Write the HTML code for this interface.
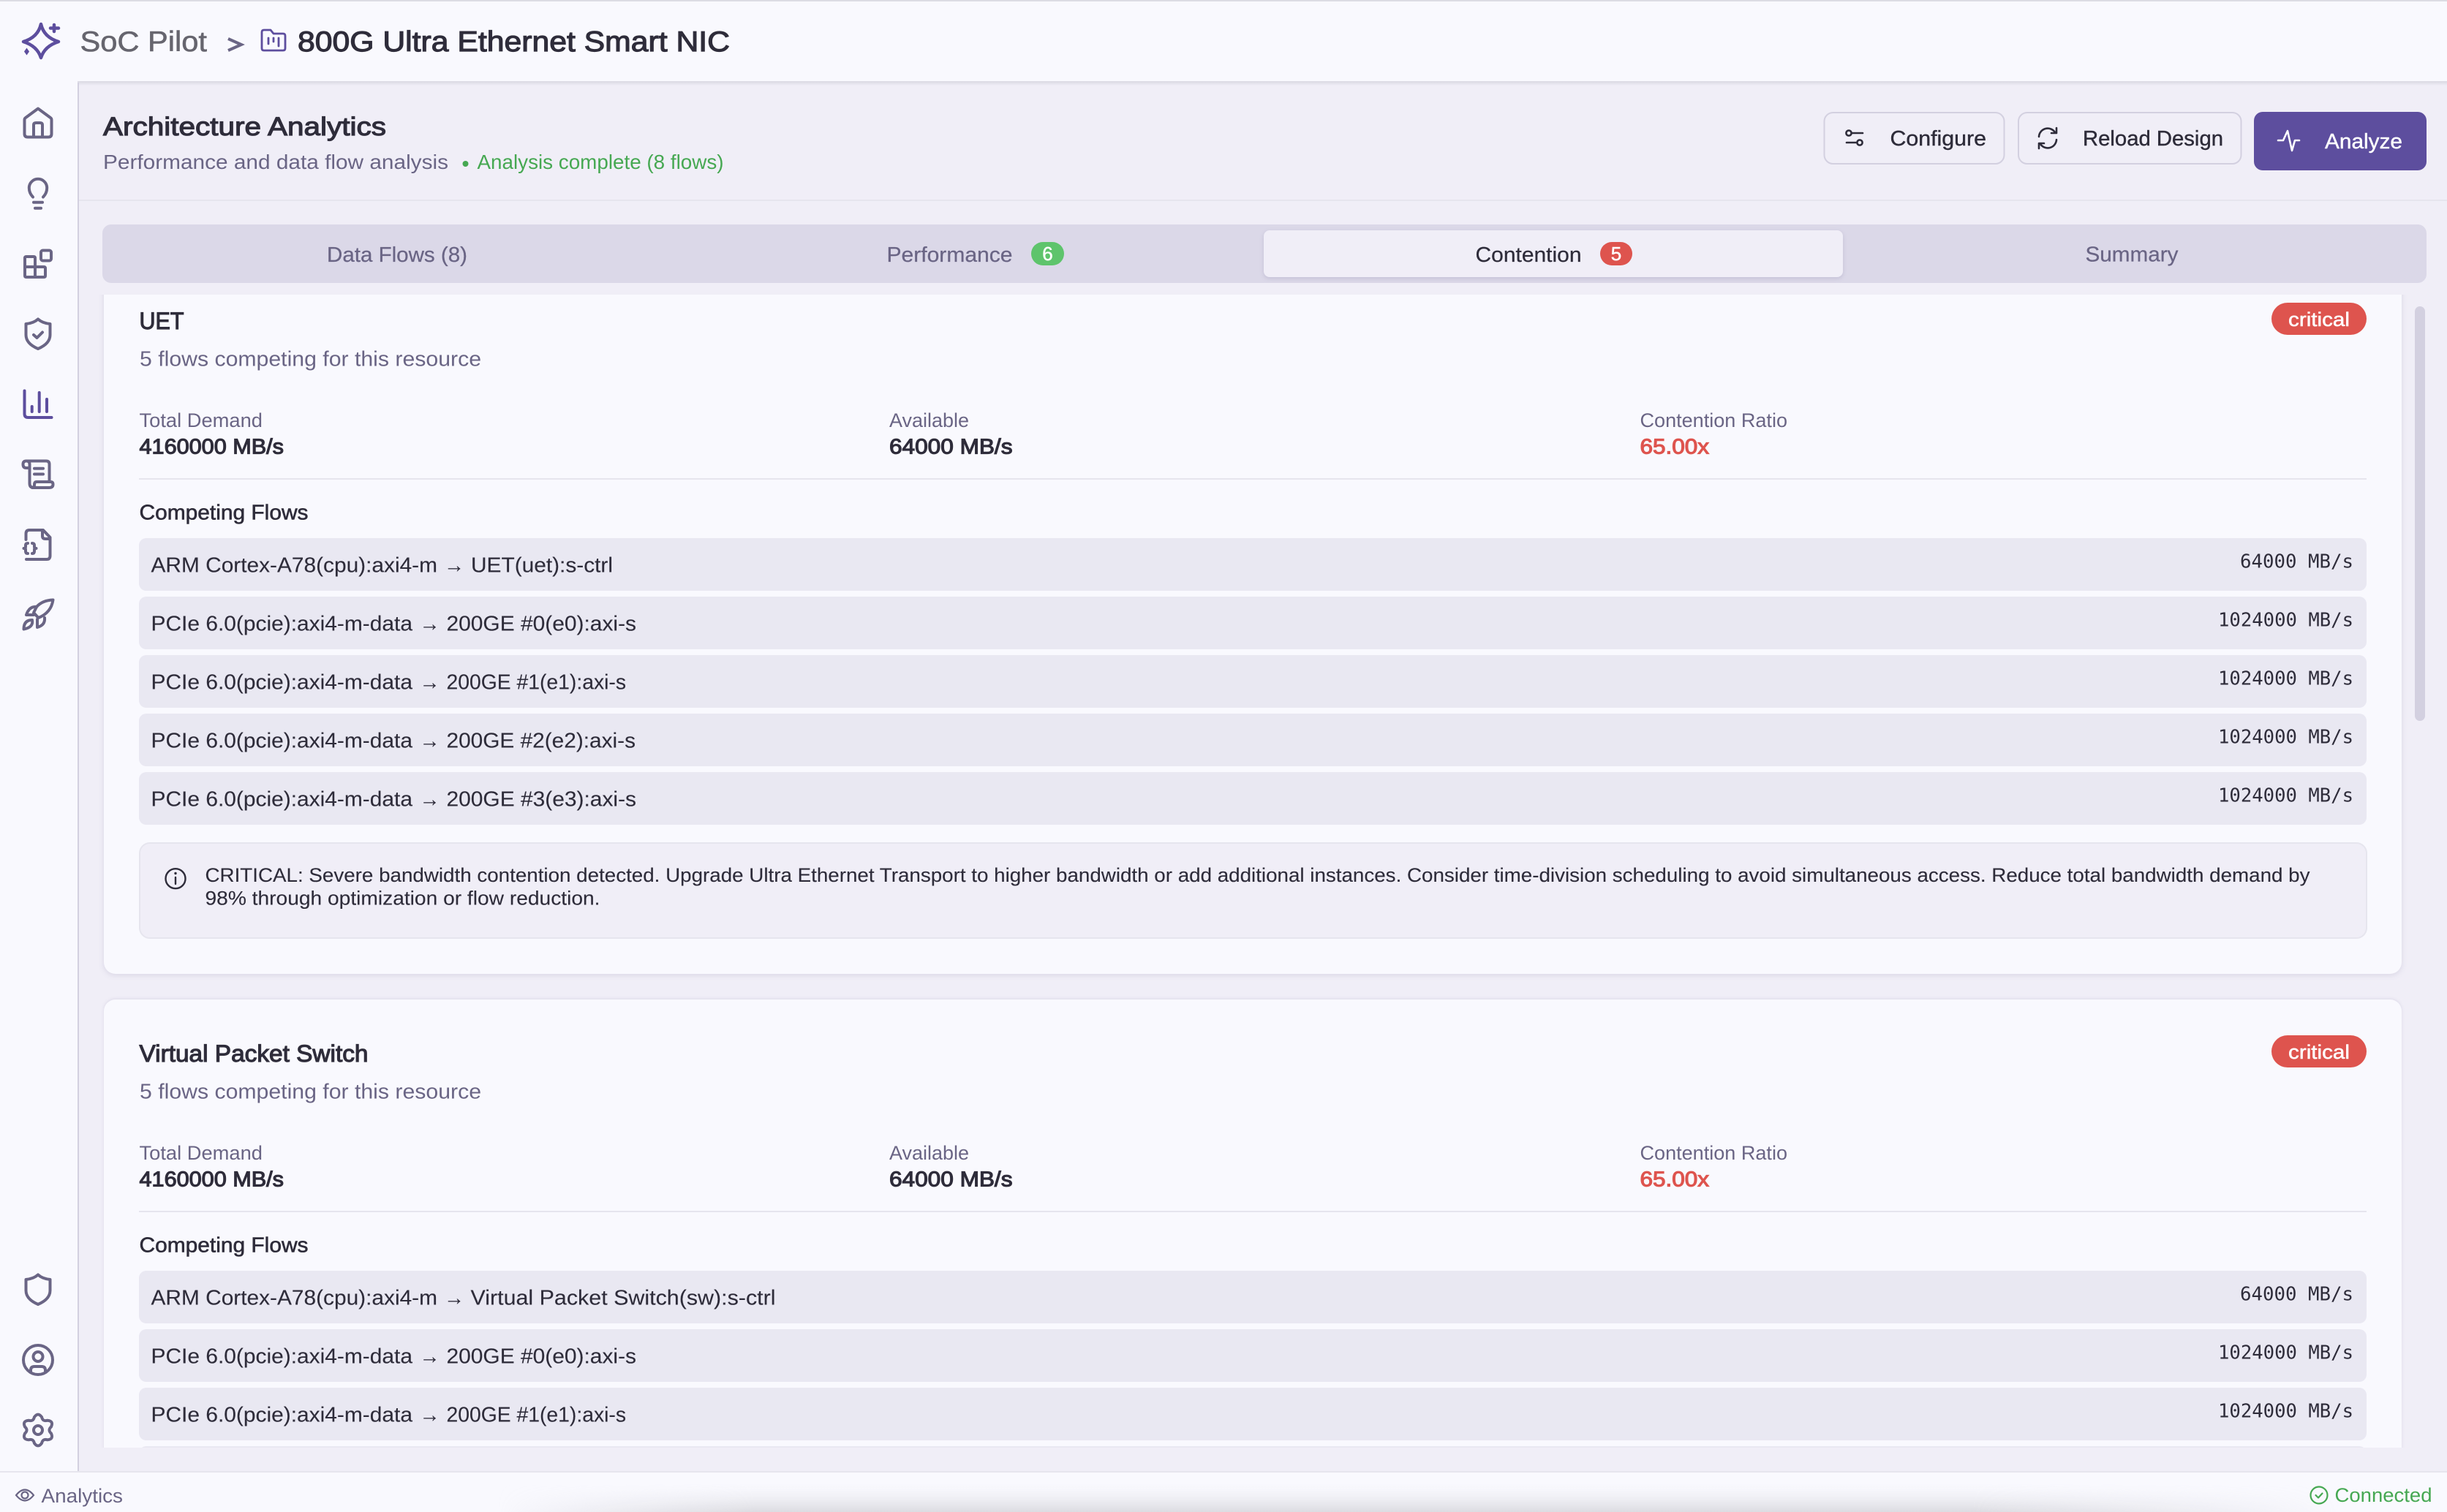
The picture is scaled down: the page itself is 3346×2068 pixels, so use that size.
<!DOCTYPE html>
<html lang="en"><head><meta charset="utf-8"><title>SoC Pilot - Architecture Analytics</title>
<style>
html,body{margin:0;padding:0;background:#F0EEF7;width:3346px;height:2068px;overflow:hidden}
svg{display:block}
text{font-family:"Liberation Sans",sans-serif;white-space:pre}
.m{stroke-width:.6}
.s{stroke-width:1.15}
.mono{font-family:"DejaVu Sans Mono","Liberation Mono",monospace;font-size:25.6px;fill:#2E2C3A}
.dk{fill:#2E2C3A;stroke:#2E2C3A}
.mu{fill:#6A6585;stroke:#6A6585}
.ic{fill:none;stroke:#6A6585;stroke-width:4;stroke-linecap:round;stroke-linejoin:round}
.row{fill:#E9E8F2}
</style></head><body>
<svg width="3346" height="2068" viewBox="0 0 3346 2068" xmlns="http://www.w3.org/2000/svg">
<defs>
<clipPath id="sc"><rect x="130" y="403" width="3165" height="1577"/></clipPath>
<linearGradient id="hs" x1="0" y1="0" x2="0" y2="1"><stop offset="0" stop-color="#d9d8e2"/><stop offset="1" stop-color="#F0EEF7"/></linearGradient>
<linearGradient id="gv" x1="0" y1="0" x2="0" y2="1"><stop offset="0" stop-color="#fff" stop-opacity="0"/><stop offset=".45" stop-color="#c9c9ce" stop-opacity=".14"/><stop offset="1" stop-color="#b4b4ba" stop-opacity=".42"/></linearGradient>
<linearGradient id="gh" x1="0" y1="0" x2="1" y2="0"><stop offset="0" stop-color="#000"/><stop offset=".14" stop-color="#fff"/><stop offset=".8" stop-color="#fff"/><stop offset="1" stop-color="#000"/></linearGradient>
<mask id="gm" maskUnits="userSpaceOnUse" x="680" y="2014" width="2520" height="54"><rect x="680" y="2014" width="2520" height="54" fill="url(#gh)"/></mask>
</defs>

<rect width="3346" height="2068" fill="#F0EEF7"/>

<!-- header -->
<rect x="0" y="111" width="3346" height="6" fill="url(#hs)"/>
<rect x="0" y="0" width="3346" height="111" fill="#F9F9FE"/>
<rect x="0" y="0" width="3346" height="2" fill="#DCDCE4"/>
<g fill="none" stroke="#5D4E9E" stroke-width="4.500" stroke-linejoin="round" stroke-linecap="round">
<path d="M56 33Q60 51 80 57Q61 63 56 79Q51 63 32 57Q52 51 56 33Z"/>
<path d="M74 34V43M69 38.500H80"/>
</g>
<path d="M36.500 65.500L40 70.500L36.500 75.500L33 70.500Z" fill="#5D4E9E"/>
<text x="109.500" y="70" font-size="39" textLength="173.500" lengthAdjust="spacingAndGlyphs" fill="#66656E" stroke="#66656E" class="m">SoC Pilot</text>
<path d="M312 53L330 61L312 69" fill="none" stroke="#6A6585" stroke-width="4"/>
<g fill="none" stroke="#5D4E9E" stroke-width="2.800" stroke-linejoin="round" stroke-linecap="round">
<path d="M358 66V44Q358 41 361 41H370L374 46H387Q390 46 390 49V66Q390 69 387 69H361Q358 69 358 66Z"/>
<path d="M367 52V60M374 52V57M381 52V63"/>
</g>
<text x="407" y="70" font-size="39" textLength="591" lengthAdjust="spacingAndGlyphs" class="dk s">800G Ultra Ethernet Smart NIC</text>

<!-- sidebar -->
<rect x="0" y="111" width="106" height="1901" fill="#F9F9FE"/>
<rect x="106" y="113" width="2" height="1899" fill="#D3D0E0"/>
<g class="ic">
<path d="M52 148.500L69 161Q70.500 162 70.500 164V183Q70.500 187.500 66 187.500H38Q33.500 187.500 33.500 183V164Q33.500 162 35 161Z"/>
<path d="M46 187V171Q46 168 49 168H55Q58 168 58 171V187"/>
<path d="M45 269.500Q39.800 264 39.800 257A12.200 12.200 0 0 1 64.200 257Q64.200 264 59 269.500"/>
<path d="M46 276.700H58M48 284.700H56"/>
<rect x="56" y="342.500" width="14" height="14" rx="2.500"/>
<path d="M34 353Q34 351 36 351H46Q48 351 48 353V365H60Q62 365 62 367V377Q62 379 60 379H36Q34 379 34 377ZM34 365H48V379"/>
<path d="M52 436.500Q58 442 68.500 443V458Q68.500 470 52 477Q35.500 470 35.500 458V443Q46 442 52 436.500Z"/>
<path d="M46 458L50.500 462L58 454.500"/>
<path d="M36 630.500H63Q67.500 630.500 67.500 635V658M40.500 640V661Q40.500 667 46 667H67Q72.500 667 72.500 662.500Q72.500 659 69 659H50Q47 659 47 663Q47 667 44 667"/>
<path d="M36 630.500Q31.500 630.500 31.500 635Q31.500 640 36 640H40.500V635Q40.500 630.500 36 630.500"/>
<path d="M47 640.700H59M47 648.500H59"/>
<path d="M35.500 738V730Q35.500 725 40 725H59L68.500 735V760Q68.500 765 64 765H36"/>
<path d="M58 726V733Q58 737 62 737H68"/>
<path d="M38 743Q35 743 35 746V748Q35 750 32.500 750Q35 750 35 752V754Q35 757 38 757M44 743Q47 743 47 746V748Q47 750 49.500 750Q47 750 47 752V754Q47 757 44 757"/>
<path d="M72.500 820.500Q58 821 50 830L46 838L52.500 845Q70 838 72.500 820.500Z"/>
<path d="M50 830Q40 829 36 841L46 841"/>
<path d="M61 845Q62 855 51 858V847"/>
<path d="M32.500 860.500Q32.500 848 44 848Q46 858 32.500 860.500Z"/>
<path d="M52 1743.500Q58 1749 68.500 1750V1765Q68.500 1777 52 1784Q35.500 1777 35.500 1765V1750Q46 1749 52 1743.500Z"/>
<circle cx="52" cy="1860" r="20"/>
<circle cx="52" cy="1855.500" r="6.500"/>
<path d="M42 1876V1874Q42 1869 47 1869H57Q62 1869 62 1874V1876"/>
<g transform="translate(52 1956)">
<path d="M-5.100-17.800Q0-25 5.100-17.800Q6.500-11.300 12.850-13.300Q21.650-12.500 17.950-4.480Q13 0 17.950 4.480Q21.650 12.500 12.850 13.300Q6.500 11.300 5.100 17.800Q0 25-5.100 17.800Q-6.500 11.300-12.850 13.300Q-21.650 12.500-17.950 4.480Q-13 0-17.950-4.480Q-21.650-12.500-12.850-13.300Q-6.500-11.300-5.100-17.800Z"/>
<circle r="6"/>
</g>
</g>
<g fill="none" stroke="#5D4E9E" stroke-width="4" stroke-linecap="round" stroke-linejoin="round">
<path d="M33.500 534.500V566Q33.500 571 38.500 571H70.500M43.700 556V563M53.700 537V563M64 546V563"/>
</g>

<!-- page header -->
<rect x="108" y="273" width="3238" height="2" fill="#E6E5EE"/>
<text x="141" y="185" font-size="35.500" textLength="387" lengthAdjust="spacingAndGlyphs" class="dk s">Architecture Analytics</text>
<text x="141" y="231" font-size="27.500" textLength="472" lengthAdjust="spacingAndGlyphs" class="mu" stroke-width="0">Performance and data flow analysis</text>
<circle cx="636.500" cy="224" r="4" fill="#46A852"/>
<text x="652.500" y="231" font-size="27.500" textLength="337" lengthAdjust="spacingAndGlyphs" fill="#46A852">Analysis complete (8 flows)</text>

<rect x="2494.500" y="154" width="246" height="70" rx="12" fill="#F0EEF7" stroke="#D3D0E0" stroke-width="2"/>
<rect x="2760" y="154" width="304.500" height="70" rx="12" fill="#F0EEF7" stroke="#D3D0E0" stroke-width="2"/>
<rect x="3082" y="153" width="236" height="80" rx="12" fill="#5D4E9E"/>
<g fill="none" stroke="#2E2C3A" stroke-width="2.600" stroke-linecap="round" stroke-linejoin="round">
<circle cx="2528" cy="182" r="3.600"/><path d="M2532 182H2547M2525 195H2539"/><circle cx="2543" cy="195" r="3.600"/>
<path d="M2788 187A12 12 0 0 1 2810 181M2812 175V182H2805M2812 191A12 12 0 0 1 2790 197M2788 203V196H2795"/>
</g>
<path d="M3115 192H3122L3128 179L3134 206L3138 192H3144" fill="none" stroke="#fff" stroke-width="2.600" stroke-linecap="round" stroke-linejoin="round"/>
<text x="2584.500" y="199" font-size="28.500" textLength="131.500" lengthAdjust="spacingAndGlyphs" class="dk" stroke-width=".4">Configure</text>
<text x="2848" y="199" font-size="28.500" textLength="192" lengthAdjust="spacingAndGlyphs" class="dk" stroke-width=".4">Reload Design</text>
<text x="3179" y="203" font-size="28.500" textLength="106" lengthAdjust="spacingAndGlyphs" fill="#fff" stroke="#fff" stroke-width=".4">Analyze</text>

<!-- tabs -->
<rect x="140" y="307" width="3178" height="80" rx="12" fill="#DBD8E8"/>
<rect x="1728" y="315" width="792" height="64" rx="8" fill="#F0EEF7" style="filter:drop-shadow(0 2px 3px rgba(60,50,110,.14))"/>
<text x="447" y="358" font-size="28.500" textLength="192" lengthAdjust="spacingAndGlyphs" class="mu" stroke-width=".25">Data Flows (8)</text>
<text x="1212.500" y="358" font-size="28.500" textLength="172" lengthAdjust="spacingAndGlyphs" class="mu" stroke-width=".25">Performance</text>
<rect x="1410" y="331" width="45" height="32" rx="16" fill="#5EC46C"/>
<text x="1432.500" y="356" font-size="26" text-anchor="middle" fill="#fff" stroke="#fff" stroke-width=".5">6</text>
<text x="2017.500" y="358" font-size="28.500" textLength="145" lengthAdjust="spacingAndGlyphs" class="dk" stroke-width=".25">Contention</text>
<rect x="2188" y="331" width="44" height="32" rx="16" fill="#DE544E"/>
<text x="2210" y="356" font-size="26" text-anchor="middle" fill="#fff" stroke="#fff" stroke-width=".5">5</text>
<text x="2851.500" y="357.500" font-size="28.500" textLength="127" lengthAdjust="spacingAndGlyphs" class="mu" stroke-width=".25">Summary</text>

<!-- scrollable -->
<g clip-path="url(#sc)">
<!-- card 1 -->
<rect x="142" y="365" width="3142" height="967" rx="16" fill="#F9F9FE" style="filter:drop-shadow(0 2px 4px rgba(60,50,110,.12))"/>
<text x="190.500" y="450" font-size="32" textLength="61" lengthAdjust="spacingAndGlyphs" class="dk s">UET</text>
<text x="191" y="500.700" font-size="28.500" textLength="467" lengthAdjust="spacingAndGlyphs" class="mu" stroke-width="0">5 flows competing for this resource</text>
<rect x="3106" y="414" width="130" height="44" rx="22" fill="#DE544E"/>
<text x="3129" y="446" font-size="26.500" textLength="84" lengthAdjust="spacingAndGlyphs" fill="#fff" stroke="#fff" stroke-width=".5">critical</text>
<text x="190.500" y="584" font-size="26.500" textLength="168.500" lengthAdjust="spacingAndGlyphs" class="mu" stroke-width="0">Total Demand</text>
<text x="190.500" y="620.700" font-size="28.500" textLength="197.500" lengthAdjust="spacingAndGlyphs" class="dk s">4160000 MB/s</text>
<text x="1216" y="584" font-size="26.500" textLength="109" lengthAdjust="spacingAndGlyphs" class="mu" stroke-width="0">Available</text>
<text x="1216" y="620.700" font-size="28.500" textLength="168.500" lengthAdjust="spacingAndGlyphs" class="dk s">64000 MB/s</text>
<text x="2242.500" y="584" font-size="26.500" textLength="201.500" lengthAdjust="spacingAndGlyphs" class="mu" stroke-width="0">Contention Ratio</text>
<text x="2242.500" y="620.700" font-size="28.500" textLength="94.500" lengthAdjust="spacingAndGlyphs" fill="#DE544E" stroke="#DE544E" class="s">65.00x</text>
<rect x="190" y="654" width="3046" height="2" fill="#E6E5EE"/>
<text x="190.500" y="710.700" font-size="28.500" textLength="231" lengthAdjust="spacingAndGlyphs" class="dk m">Competing Flows</text>

<rect class="row" x="190" y="736" width="3046" height="72" rx="10"/>
<rect class="row" x="190" y="816" width="3046" height="72" rx="10"/>
<rect class="row" x="190" y="896" width="3046" height="72" rx="10"/>
<rect class="row" x="190" y="976" width="3046" height="72" rx="10"/>
<rect class="row" x="190" y="1056" width="3046" height="72" rx="10"/>
<g font-size="28.500" class="dk" stroke-width=".12">
<text x="206.500" y="782.700" textLength="391.500" lengthAdjust="spacingAndGlyphs">ARM Cortex-A78(cpu):axi4-m</text><text x="607" y="782.700" textLength="28" lengthAdjust="spacingAndGlyphs">→</text><text x="644" y="782.700" textLength="194" lengthAdjust="spacingAndGlyphs">UET(uet):s-ctrl</text>
<text x="206.500" y="862.700" textLength="357.500" lengthAdjust="spacingAndGlyphs">PCIe 6.0(pcie):axi4-m-data</text><text x="573.500" y="862.700" textLength="28" lengthAdjust="spacingAndGlyphs">→</text><text x="610.500" y="862.700" textLength="259.500" lengthAdjust="spacingAndGlyphs">200GE #0(e0):axi-s</text>
<text x="206.500" y="942.700" textLength="357.500" lengthAdjust="spacingAndGlyphs">PCIe 6.0(pcie):axi4-m-data</text><text x="573.500" y="942.700" textLength="28" lengthAdjust="spacingAndGlyphs">→</text><text x="610.500" y="942.700" textLength="245.500" lengthAdjust="spacingAndGlyphs">200GE #1(e1):axi-s</text>
<text x="206.500" y="1022.700" textLength="357.500" lengthAdjust="spacingAndGlyphs">PCIe 6.0(pcie):axi4-m-data</text><text x="573.500" y="1022.700" textLength="28" lengthAdjust="spacingAndGlyphs">→</text><text x="610.500" y="1022.700" textLength="258.500" lengthAdjust="spacingAndGlyphs">200GE #2(e2):axi-s</text>
<text x="206.500" y="1102.700" textLength="357.500" lengthAdjust="spacingAndGlyphs">PCIe 6.0(pcie):axi4-m-data</text><text x="573.500" y="1102.700" textLength="28" lengthAdjust="spacingAndGlyphs">→</text><text x="610.500" y="1102.700" textLength="259.500" lengthAdjust="spacingAndGlyphs">200GE #3(e3):axi-s</text>
</g>
<text class="mono" x="3063" y="776.500" textLength="155" lengthAdjust="spacingAndGlyphs">64000 MB/s</text>
<text class="mono" x="3033" y="856.500" textLength="185" lengthAdjust="spacingAndGlyphs">1024000 MB/s</text>
<text class="mono" x="3033" y="936.500" textLength="185" lengthAdjust="spacingAndGlyphs">1024000 MB/s</text>
<text class="mono" x="3033" y="1016.500" textLength="185" lengthAdjust="spacingAndGlyphs">1024000 MB/s</text>
<text class="mono" x="3033" y="1096.500" textLength="185" lengthAdjust="spacingAndGlyphs">1024000 MB/s</text>

<rect x="191" y="1153" width="3045" height="130" rx="14" fill="#F0EEF7" stroke="#E6E5EE" stroke-width="2"/>
<g fill="none" stroke="#2E2C3A" stroke-width="2.400" stroke-linecap="round">
<circle cx="240" cy="1201.700" r="13.500"/><path d="M240 1200V1209"/>
</g>
<circle cx="240" cy="1194.500" r="1.700" fill="#2E2C3A"/>
<text x="280.500" y="1206" font-size="26.500" textLength="2878" lengthAdjust="spacingAndGlyphs" class="dk" stroke-width=".12">CRITICAL: Severe bandwidth contention detected. Upgrade Ultra Ethernet Transport to higher bandwidth or add additional instances. Consider time-division scheduling to avoid simultaneous access. Reduce total bandwidth demand by</text>
<text x="280.500" y="1237.700" font-size="26.500" textLength="540" lengthAdjust="spacingAndGlyphs" class="dk" stroke-width=".12">98% through optimization or flow reduction.</text>

<!-- card 2 -->
<rect x="142" y="1367" width="3142" height="640" rx="16" fill="#F9F9FE" style="filter:drop-shadow(0 -1px 2px rgba(60,50,110,.1))"/>
<g transform="translate(0 1002)">
<text x="190.500" y="450" font-size="32" textLength="313" lengthAdjust="spacingAndGlyphs" class="dk s">Virtual Packet Switch</text>
<text x="191" y="500.700" font-size="28.500" textLength="467" lengthAdjust="spacingAndGlyphs" class="mu" stroke-width="0">5 flows competing for this resource</text>
<rect x="3106" y="414" width="130" height="44" rx="22" fill="#DE544E"/>
<text x="3129" y="446" font-size="26.500" textLength="84" lengthAdjust="spacingAndGlyphs" fill="#fff" stroke="#fff" stroke-width=".5">critical</text>
<text x="190.500" y="584" font-size="26.500" textLength="168.500" lengthAdjust="spacingAndGlyphs" class="mu" stroke-width="0">Total Demand</text>
<text x="190.500" y="620.700" font-size="28.500" textLength="197.500" lengthAdjust="spacingAndGlyphs" class="dk s">4160000 MB/s</text>
<text x="1216" y="584" font-size="26.500" textLength="109" lengthAdjust="spacingAndGlyphs" class="mu" stroke-width="0">Available</text>
<text x="1216" y="620.700" font-size="28.500" textLength="168.500" lengthAdjust="spacingAndGlyphs" class="dk s">64000 MB/s</text>
<text x="2242.500" y="584" font-size="26.500" textLength="201.500" lengthAdjust="spacingAndGlyphs" class="mu" stroke-width="0">Contention Ratio</text>
<text x="2242.500" y="620.700" font-size="28.500" textLength="94.500" lengthAdjust="spacingAndGlyphs" fill="#DE544E" stroke="#DE544E" class="s">65.00x</text>
<rect x="190" y="654" width="3046" height="2" fill="#E6E5EE"/>
<text x="190.500" y="710.700" font-size="28.500" textLength="231" lengthAdjust="spacingAndGlyphs" class="dk m">Competing Flows</text>
<rect class="row" x="190" y="736" width="3046" height="72" rx="10"/>
<rect class="row" x="190" y="816" width="3046" height="72" rx="10"/>
<rect class="row" x="190" y="896" width="3046" height="72" rx="10"/>
<rect class="row" x="190" y="976" width="3046" height="20" rx="10"/>
<g font-size="28.500" class="dk" stroke-width=".12">
<text x="206.500" y="782.700" textLength="391.500" lengthAdjust="spacingAndGlyphs">ARM Cortex-A78(cpu):axi4-m</text><text x="607" y="782.700" textLength="28" lengthAdjust="spacingAndGlyphs">→</text><text x="643.500" y="782.700" textLength="417" lengthAdjust="spacingAndGlyphs">Virtual Packet Switch(sw):s-ctrl</text>
<text x="206.500" y="862.700" textLength="357.500" lengthAdjust="spacingAndGlyphs">PCIe 6.0(pcie):axi4-m-data</text><text x="573.500" y="862.700" textLength="28" lengthAdjust="spacingAndGlyphs">→</text><text x="610.500" y="862.700" textLength="259.500" lengthAdjust="spacingAndGlyphs">200GE #0(e0):axi-s</text>
<text x="206.500" y="942.700" textLength="357.500" lengthAdjust="spacingAndGlyphs">PCIe 6.0(pcie):axi4-m-data</text><text x="573.500" y="942.700" textLength="28" lengthAdjust="spacingAndGlyphs">→</text><text x="610.500" y="942.700" textLength="245.500" lengthAdjust="spacingAndGlyphs">200GE #1(e1):axi-s</text>
</g>
<text class="mono" x="3063" y="776.500" textLength="155" lengthAdjust="spacingAndGlyphs">64000 MB/s</text>
<text class="mono" x="3033" y="856.500" textLength="185" lengthAdjust="spacingAndGlyphs">1024000 MB/s</text>
<text class="mono" x="3033" y="936.500" textLength="185" lengthAdjust="spacingAndGlyphs">1024000 MB/s</text>
</g>
</g>

<!-- scrollbar -->
<rect x="3302" y="419" width="14" height="567" rx="7" fill="#D3D0E0"/>

<!-- status bar -->
<rect x="0" y="2012" width="3346" height="56" fill="#F9F9FE"/>
<rect x="0" y="2012" width="3346" height="2" fill="#E6E5EE"/>
<rect x="680" y="2026" width="2520" height="42" fill="url(#gv)" mask="url(#gm)"/>
<g fill="none" stroke="#6A6585" stroke-width="2.200">
<path d="M22 2045Q34 2030 46 2045Q34 2060 22 2045Z"/><circle cx="34" cy="2045" r="4.500"/>
</g>
<text x="56.500" y="2055" font-size="26.500" textLength="111.500" lengthAdjust="spacingAndGlyphs" class="mu" stroke-width="0">Analytics</text>
<g fill="none" stroke="#46A852" stroke-width="2.200" stroke-linecap="round" stroke-linejoin="round">
<circle cx="3171" cy="2045" r="11.500"/><path d="M3166.500 2045L3170 2048.500L3175.500 2042.500"/>
</g>
<text x="3192.500" y="2054" font-size="26.500" textLength="133" lengthAdjust="spacingAndGlyphs" fill="#46A852">Connected</text>
</svg>
</body></html>
